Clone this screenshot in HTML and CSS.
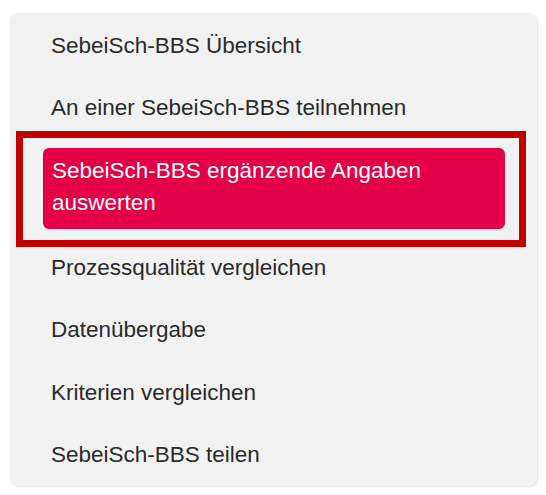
FILE: index.html
```html
<!DOCTYPE html>
<html lang="de">
<head>
<meta charset="utf-8">
<title>SebeiSch-BBS Menü</title>
<link rel="stylesheet" href="styles.css">
</head>
<body>
<nav class="panel">
  <ul class="menu">
    <li class="item"><a class="link">SebeiSch-BBS Übersicht</a></li>
    <li class="item"><a class="link">An einer SebeiSch-BBS teilnehmen</a></li>
    <li class="item highlight"><a class="link active">SebeiSch-BBS ergänzende Angaben auswerten</a></li>
    <li class="item"><a class="link">Prozessqualität vergleichen</a></li>
    <li class="item"><a class="link">Datenübergabe</a></li>
    <li class="item"><a class="link">Kriterien vergleichen</a></li>
    <li class="item"><a class="link">SebeiSch-BBS teilen</a></li>
  </ul>
</nav>
</body>
</html>
```
FILE: styles.css
```css
html, body {
  margin: 0;
  padding: 0;
  background: #ffffff;
}
body {
  font-family: "Liberation Sans", Arial, sans-serif;
  padding: 13px 9px 9px 10px;
}
.panel {
  background: #f2f2f2;
  border-radius: 8px;
  box-shadow: 1px 1px 2px rgba(0, 0, 0, 0.12);
  padding: 9.75px 32px 4.25px 32px;
}
.menu {
  list-style: none;
  margin: 0;
  padding: 0;
  display: flex;
  flex-direction: column;
  gap: 13px;
}
.link {
  display: block;
  padding: 7px 10px 10.5px 9px;
  font-size: 22.5px;
  line-height: 32px;
  color: #2a2a2a;
  border-radius: 6px;
}
.link.active {
  background: #e30047;
  color: #ffffff;
}
.highlight {
  border: 7px solid #c00000;
  margin: -17px -21px -15.5px -26px;
  padding: 10px 14px 11px 20px;
}
```
